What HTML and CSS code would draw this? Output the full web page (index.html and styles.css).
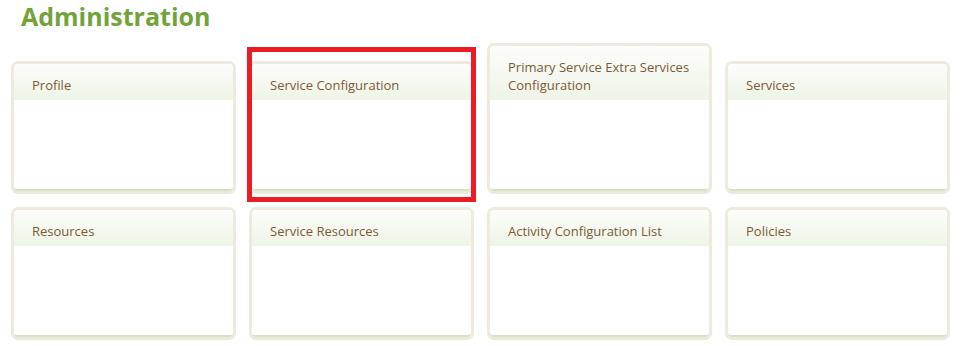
FILE: index.html
```html
<!DOCTYPE html>
<html>
<head>
<meta charset="utf-8">
<link rel="stylesheet" href="styles.css">
</head>
<body>
<div class="page">
  <h1 class="title">Administration</h1>
  <div class="grid">
    <div class="card"><div class="card-head">Profile</div><div class="card-body"></div></div>
    <div class="card selected"><div class="card-head">Service Configuration</div><div class="card-body"></div><div class="highlight"></div></div>
    <div class="card"><div class="card-head">Primary Service Extra Services Configuration</div><div class="card-body"></div></div>
    <div class="card"><div class="card-head">Services</div><div class="card-body"></div></div>
    <div class="card"><div class="card-head">Resources</div><div class="card-body"></div></div>
    <div class="card"><div class="card-head">Service Resources</div><div class="card-body"></div></div>
    <div class="card"><div class="card-head">Activity Configuration List</div><div class="card-body"></div></div>
    <div class="card"><div class="card-head">Policies</div><div class="card-body"></div></div>
  </div>
</div>
</body>
</html>
```
FILE: styles.css
```css
html, body {
  margin: 0;
  padding: 0;
  background: #ffffff;
}
.page {
  padding: 0 10px 0 11px;
  font-family: "Open Sans", "Noto Sans", sans-serif;
}
.title {
  margin: 0 0 10px 0;
  padding-left: 10px;
  font-family: "Open Sans", sans-serif;
  font-weight: 700;
  font-size: 25px;
  line-height: 33px;
  color: #72a23a;
}
.grid {
  display: grid;
  grid-template-columns: repeat(4, 1fr);
  column-gap: 13px;
  row-gap: 13px;
  align-items: end;
}
.card {
  position: relative;
  border: 3px solid #eeeadf;
  border-bottom-color: #ebe9dc;
  border-radius: 7px;
  background: #ffffff;
}
.card-head {
  padding: 12px 18px 6px 18px;
  font-size: 13px;
  line-height: 18px;
  color: #7c5a38;
  border-radius: 4px 4px 0 0;
  background: linear-gradient(#fdfdfb, #eef4e6);
}
.card-body {
  height: 89px;
  border-bottom: 2px solid #d4e4c1;
  border-radius: 0 0 4px 4px;
  background: #ffffff;
}
.highlight {
  position: absolute;
  top: -17px;
  left: -5px;
  right: -5px;
  bottom: -11px;
  border: 5px solid #ec1c24;
}
```
